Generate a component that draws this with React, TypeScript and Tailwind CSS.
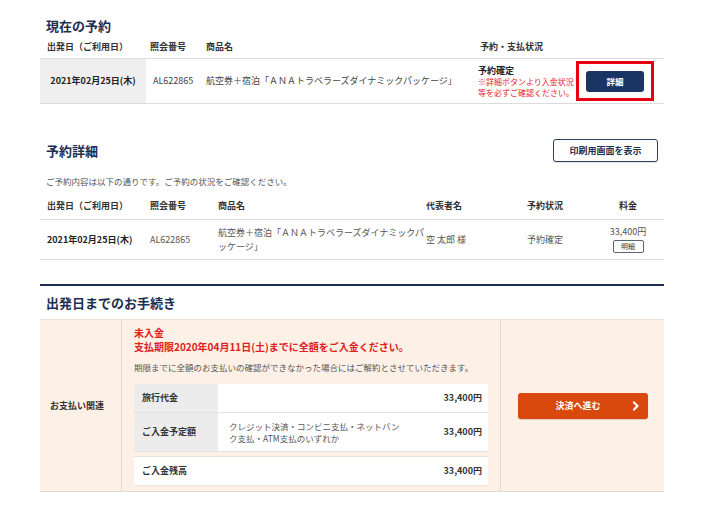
import React from 'react';

// 予約確認ページ — 現在の予約 / 予約詳細 / 出発日までのお手続き

const PRODUCT = '航空券＋宿泊「ＡＮＡトラベラーズダイナミックパッケージ」';

function ChevronRight() {
  return (
    <svg width="8" height="10" viewBox="0 0 8 10" className="block">
      <polyline points="2,1.5 5.5,5 2,8.5" fill="none" stroke="#fff" strokeWidth="2.2" strokeLinecap="round" strokeLinejoin="round" />
    </svg>
  );
}

function CurrentReservation() {
  return (
    <section>
      <h2 className="mt-[17px] h-[18px] flex items-center pl-[6px] text-[13px] font-bold text-[#1c2f52]">現在の予約</h2>
      {/* header */}
      <div className="h-[23px] grid grid-cols-[106px_60px_268px_102px_88px] items-center text-[9px] font-semibold text-[#333]">
        <span className="pl-[7px]">出発日（ご利用日）</span>
        <span className="pl-[4px]">照会番号</span>
        <span>商品名</span>
        <span className="pl-[6px]">予約・支払状況</span>
        <span />
      </div>
      {/* row */}
      <div className="h-[46px] grid grid-cols-[106px_60px_268px_102px_88px] items-center border-y border-[#dcdcdc] text-[9px] text-[#444]">
        <div className="h-full bg-[#efefef] flex items-center justify-center font-bold text-[#222]">2021年02月25日(木)</div>
        <span className="pl-[7px]">AL622865</span>
        <span className="whitespace-nowrap">{PRODUCT}</span>
        <div className="pl-[4px] leading-[11px]">
          <p className="font-bold text-[#222]">予約確定</p>
          <p className="text-[8px] text-[#e5262b]">※詳細ボタンより入金状況<br />等を必ずご確認ください。</p>
        </div>
        <div className="h-full flex items-center">
          <div className="w-[78px] h-[40px] border-[3px] border-[#e60012] flex items-center justify-center">
            <button type="button" className="w-[58px] h-[21px] rounded-[3px] bg-[#1a3463] text-white text-[8.5px] font-bold">詳細</button>
          </div>
        </div>
      </div>
    </section>
  );
}

function ReservationDetail() {
  const cols = 'grid grid-cols-[106px_68px_212px_100px_66px_72px]';
  return (
    <section>
      <div className="mt-[35px] h-[23px] flex items-center justify-between">
        <h2 className="pl-[6px] text-[13px] font-bold text-[#1c2f52]">予約詳細</h2>
        <button type="button" className="w-[105px] h-[23px] mr-[6px] rounded-[3px] border border-[#2c4262] bg-white text-[9px] font-bold text-[#1c2f52] shadow-[0_1px_1px_rgba(0,0,0,0.12)]">
          印刷用画面を表示
        </button>
      </div>
      <p className="mt-[12px] h-[14px] flex items-center pl-[6px] text-[8.5px] text-[#555]">
        ご予約内容は以下の通りです。ご予約の状況をご確認ください。
      </p>
      <div className={`${cols} mt-[5px] h-[26px] items-center text-[9px] font-semibold text-[#333]`}>
        <span className="pl-[7px]">出発日（ご利用日）</span>
        <span className="pl-[4px]">照会番号</span>
        <span className="pl-[4px]">商品名</span>
        <span>代表者名</span>
        <span className="pl-[1px]">予約状況</span>
        <span className="text-center">料金</span>
      </div>
      <div className={`${cols} h-[41px] items-center border-y border-[#dcdcdc] text-[9px] text-[#555]`}>
        <span className="pl-[7px] font-bold text-[#222]">2021年02月25日(木)</span>
        <span className="pl-[4px]">AL622865</span>
        <span className="pl-[4px] leading-[14px]">{PRODUCT}</span>
        <span>空 太郎 様</span>
        <span className="pl-[1px]">予約確定</span>
        <div className="flex flex-col items-center">
          <span className="leading-[12px]">33,400円</span>
          <button type="button" className="mt-[2px] w-[31px] h-[13px] rounded-[2px] border border-[#5a6478] bg-white text-[7px] leading-none text-[#333]">明細</button>
        </div>
      </div>
    </section>
  );
}

function PaymentRow({ label, note, amount, shaded, tall }: { label: string; note?: string; amount: string; shaded?: boolean; tall?: boolean }) {
  return (
    <div className={`flex ${tall ? 'h-[38px]' : 'h-[28px]'} bg-white text-[9px]`}>
      <div className={`w-[84px] flex items-center pl-[8px] font-bold text-[#333] ${shaded ? 'bg-[#ececec]' : ''}`}>{label}</div>
      <div className="flex-1 flex items-center pl-[11px] pr-[4px] text-[8.5px] leading-[12px] text-[#555]">
        <span className="w-[176px]">{note}</span>
      </div>
      <div className="flex items-center pr-[6px] font-semibold text-[#333]">{amount}</div>
    </div>
  );
}

function Procedures() {
  return (
    <section>
      <div className="mt-[24px] h-[2px] bg-[#1c2f52]" />
      <h2 className="h-[33px] flex items-center pl-[6px] text-[13px] font-bold text-[#1c2f52]">出発日までのお手続き</h2>
      <div className="flex h-[173px] bg-[#fdf1e7] border-t border-[#eee2d6] border-b border-b-[#dddddd]">
        <div className="w-[82px] flex items-center pl-[10px] border-r border-[#e4d9ce] text-[9px] font-bold text-[#333]">
          お支払い関連
        </div>
        <div className="w-[379px] pl-[12px] pr-[12px] pt-[6px] border-r border-[#e4d9ce]">
          <p className="text-[10px] leading-[14px] font-bold text-[#e02020]">未入金</p>
          <p className="text-[10px] leading-[14px] font-bold text-[#e02020]">支払期限2020年04月11日(土)までに全額をご入金ください。</p>
          <p className="mt-[6px] h-[14px] flex items-center text-[8.5px] text-[#555]">
            期限までに全額のお支払いの確認ができなかった場合にはご解約とさせていただきます。
          </p>
          <div className="mt-[10px]">
            <div className="border-b border-[#e2e2e2]">
              <PaymentRow label="旅行代金" amount="33,400円" shaded />
            </div>
            <div className="border-b border-[#e2e2e2]">
              <PaymentRow label="ご入金予定額" note="クレジット決済・コンビニ支払・ネットバンク支払・ATM支払のいずれか" amount="33,400円" shaded tall />
            </div>
            <div className="h-[4px]" />
            <div className="border-y border-[#ebe3dc]">
              <PaymentRow label="ご入金残高" amount="33,400円" />
            </div>
          </div>
        </div>
        <div className="flex-1 flex items-center pl-[17px]">
          <button type="button" className="w-[130px] h-[26px] rounded-[3px] bg-[#d9480c] text-white text-[9px] font-bold flex items-center shadow-[0_1px_1px_rgba(0,0,0,0.15)]">
            <span className="flex-1 text-center pl-[6px]">決済へ進む</span>
            <span className="pr-[8px]"><ChevronRight /></span>
          </button>
        </div>
      </div>
    </section>
  );
}

export default function App() {
  return (
    <div className="w-[706px] h-[512px] bg-white font-['Noto_Sans_CJK_JP','Noto_Sans',sans-serif] overflow-hidden">
      <div className="ml-[40px] w-[624px]">
        <CurrentReservation />
        <ReservationDetail />
        <Procedures />
      </div>
    </div>
  );
}
